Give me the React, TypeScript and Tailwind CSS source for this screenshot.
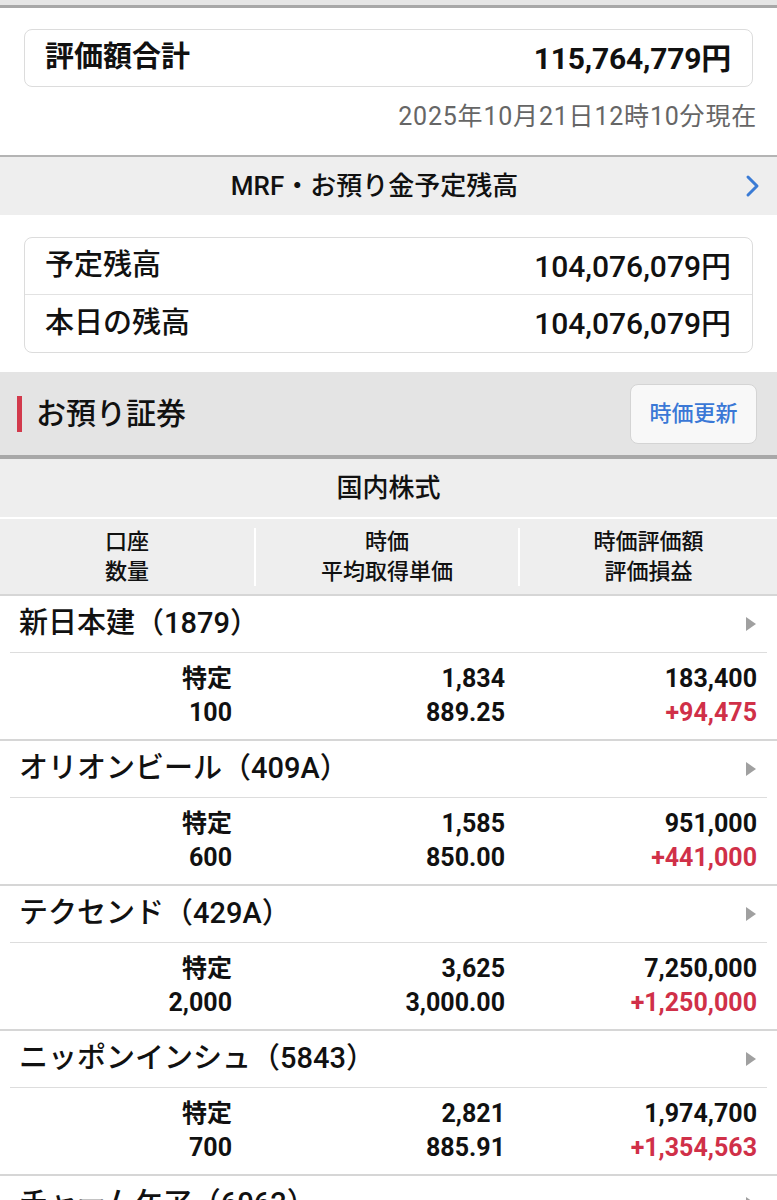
import React from "react";

const stocks = [
  { name: "新日本建（1879）", acct: "特定", qty: "100", price: "1,834", avg: "889.25", val: "183,400", pl: "+94,475" },
  { name: "オリオンビール（409A）", acct: "特定", qty: "600", price: "1,585", avg: "850.00", val: "951,000", pl: "+441,000" },
  { name: "テクセンド（429A）", acct: "特定", qty: "2,000", price: "3,625", avg: "3,000.00", val: "7,250,000", pl: "+1,250,000" },
  { name: "ニッポンインシュ（5843）", acct: "特定", qty: "700", price: "2,821", avg: "885.91", val: "1,974,700", pl: "+1,354,563" },
  { name: "チャームケア（6062）", acct: "特定", qty: "", price: "", avg: "", val: "", pl: "" },
];

const font = "font-['Roboto','Noto_Sans_CJK_JP',sans-serif]";

export default function App() {
  return (
    <div className={`w-[777px] h-[1200px] overflow-hidden bg-white text-[#111] ${font}`}>
      <div className="h-[5px] bg-[#e6e6e6]" />
      <div className="h-[3px] bg-[#a8a8a8]" />
      <div className="px-[24px] pt-[21px]">
        <div className="h-[58px] rounded-[8px] border border-[#dcdcdc] flex items-center justify-between pl-[20px] pr-[21px]">
          <span className="text-[29px] font-bold">評価額合計</span>
          <span className="text-[30px] font-bold tracking-[-0.2px]">115,764,779円</span>
        </div>
      </div>
      <div className="h-[60px] flex items-center justify-end pr-[20px] text-[25px] text-[#666] tracking-[0.8px]">
        2025年10月21日12時10分現在
      </div>
      <div className="h-[8px]" />
      <div className="h-[2px] bg-[#b4b4b4]" />
      <div className="h-[58px] bg-[#eeeeee] relative flex items-center justify-center pr-[28px]">
        <span className="text-[26px] font-medium">MRF・お預り金予定残高</span>
        <svg className="absolute right-[16px] top-[17px]" width="16" height="24" viewBox="0 0 16 24">
          <path d="M3 3 L12 12 L3 21" fill="none" stroke="#3a7bd5" strokeWidth="3" strokeLinecap="round" strokeLinejoin="round" />
        </svg>
      </div>
      <div className="px-[24px] pt-[22px] pb-[19px]">
        <div className="rounded-[8px] border border-[#dcdcdc]">
          <div className="h-[57px] flex items-center justify-between pl-[20px] pr-[21px] border-b border-[#e2e2e2]">
            <span className="text-[29px] font-medium">予定残高</span>
            <span className="text-[30px] font-medium">104,076,079円</span>
          </div>
          <div className="h-[57px] flex items-center justify-between pl-[20px] pr-[21px]">
            <span className="text-[29px] font-medium">本日の残高</span>
            <span className="text-[30px] font-medium">104,076,079円</span>
          </div>
        </div>
      </div>
      <div className="h-[83px] bg-[#e4e4e4] flex items-center justify-between pl-[17px] pr-[20px]">
        <div className="flex items-center">
          <div className="w-[5px] h-[36px] bg-[#d23a4c]" />
          <span className="ml-[14px] text-[30px] font-medium">お預り証券</span>
        </div>
        <div className="w-[127px] h-[60px] rounded-[8px] border border-[#d4d4d4] bg-[#f8f8f8] flex items-center justify-center text-[22px] font-medium text-[#3b78d6]">
          時価更新
        </div>
      </div>
      <div className="h-[4px] bg-[#a8a8a8]" />
      <div className="h-[58px] bg-[#eeeeee] flex items-center justify-center text-[26px] font-medium">国内株式</div>
      <div className="h-[2px] bg-white" />
      <div className="h-[75px] bg-[#eeeeee] grid grid-cols-[254px_264px_259px] items-center text-[22px] font-medium leading-[30px]">
        <div className="text-center">口座<br />数量</div>
        <div className="text-center border-l-2 border-white h-[58px] flex flex-col justify-center">時価<br />平均取得単価</div>
        <div className="text-center border-l-2 border-white h-[58px] flex flex-col justify-center">時価評価額<br />評価損益</div>
      </div>
      <div className="h-[2px] bg-[#d6d6d6]" />
      {stocks.map((s, i) => (
        <div key={i}>
          <div className="h-[56px] flex items-center justify-between pl-[19px] pr-[21px]">
            <span className="text-[29px] font-medium">{s.name}</span>
            <svg width="10" height="14" viewBox="0 0 10 14"><path d="M0 0 L10 7 L0 14 Z" fill="#a0a0a0" /></svg>
          </div>
          <div className="mx-[10px] h-[1px] bg-[#dddddd]" />
          <div className="h-[86px] grid grid-cols-[254px_264px_259px] content-center text-[25px] font-bold leading-[34px]">
            <div className="text-right pr-[22px]">{s.acct}<br />{s.qty}</div>
            <div className="text-right pr-[13px]">{s.price}<br />{s.avg}</div>
            <div className="text-right pr-[20px]">{s.val}<br /><span className="text-[#d03048]">{s.pl}</span></div>
          </div>
          <div className="h-[2px] bg-[#d6d6d6]" />
        </div>
      ))}
    </div>
  );
}
